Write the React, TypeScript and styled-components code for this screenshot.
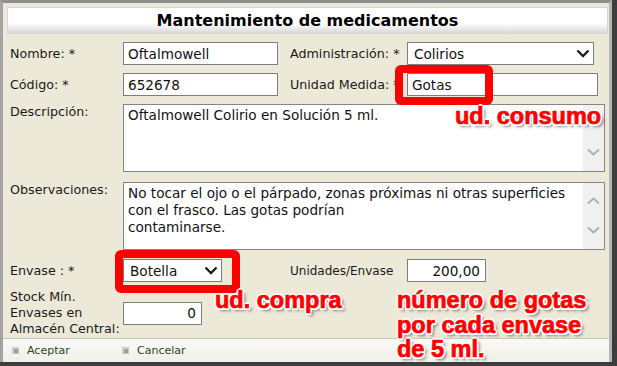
import React from 'react';
import styled, { createGlobalStyle } from 'styled-components';

const GlobalStyle = createGlobalStyle`
  html, body {
    margin: 0;
    padding: 0;
    background: #3d3d3d;
  }
  body {
    font-family: 'DejaVu Sans', Verdana, sans-serif;
  }
`;

const Window = styled.div`
  position: relative;
  width: 617px;
  height: 366px;
  background: #3d3d3d;
  overflow: hidden;
`;

const Frame = styled.div`
  box-sizing: border-box;
  width: 612px;
  height: 362px;
  display: flex;
  flex-direction: column;
  background: #ece9d8;
  border-top: 3px solid #8f8f8f;
  border-left: 3px solid #a3a3a3;
  border-right: 3px solid #b5b5b5;
`;

const TitleBar = styled.div`
  box-sizing: border-box;
  height: 27px;
  margin: 4px 1px 0 4px;
  border: 1px solid #d6d6d6;
  background: linear-gradient(#ffffff 0%, #ffffff 60%, #d9d9d9 100%);
  display: flex;
  align-items: center;
  justify-content: center;
  font-weight: bold;
  font-size: 16px;
  color: #000;
`;

const Form = styled.div`
  flex: 1;
  display: flex;
  flex-direction: column;
  padding-left: 7px;
`;

const Row = styled.div<{ $mt: number; $top?: boolean }>`
  display: flex;
  align-items: ${(p) => (p.$top ? 'flex-start' : 'center')};
  margin-top: ${(p) => p.$mt}px;
`;

const Label = styled.label<{ $w: number; $ml?: number; $size?: number }>`
  flex: none;
  width: ${(p) => p.$w}px;
  margin-left: ${(p) => p.$ml ?? 0}px;
  font-size: ${(p) => p.$size ?? 12.7}px;
  line-height: 16px;
  color: #1a1a1a;
`;

const TextInput = styled.div<{ $w: number; $right?: boolean }>`
  box-sizing: border-box;
  flex: none;
  width: ${(p) => p.$w}px;
  height: 23px;
  padding: 0 ${(p) => (p.$right ? 5 : 4)}px;
  border: 1px solid #7d7d7d;
  background: #fff;
  display: flex;
  align-items: center;
  justify-content: ${(p) => (p.$right ? 'flex-end' : 'flex-start')};
  font-size: 13.6px;
  color: #111;
`;

const SelectBox = styled.div<{ $w: number }>`
  box-sizing: border-box;
  flex: none;
  width: ${(p) => p.$w}px;
  height: 23px;
  padding: 0 3px 0 6px;
  border: 1px solid #7d7d7d;
  background: #fff;
  display: flex;
  align-items: center;
  justify-content: space-between;
  font-size: 13.6px;
  color: #111;
`;

const TextArea = styled.div`
  box-sizing: border-box;
  flex: none;
  width: 482px;
  height: 68px;
  border: 1px solid #858585;
  background: #fff;
  display: flex;
`;

const AreaText = styled.div`
  flex: 1;
  padding: 2px 4px;
  font-size: 13.6px;
  line-height: 17px;
  color: #111;
  white-space: pre;
`;

const ScrollTrack = styled.div`
  flex: none;
  width: 21px;
  background: #f0f0f0;
  display: flex;
  flex-direction: column;
  align-items: center;
  justify-content: space-between;
  padding: 14px 0 15px;
  box-sizing: border-box;
`;

const Footer = styled.div`
  box-sizing: border-box;
  height: 24px;
  border-top: 1px solid #c9c7bd;
  background: linear-gradient(#f9f9f7, #f0efe9);
  display: flex;
  align-items: center;
  padding-left: 9px;
`;

const FooterButton = styled.div`
  width: 110px;
  display: flex;
  align-items: center;
  gap: 8px;
  font-size: 11px;
  color: #264a26;
`;

const ButtonIcon = styled.span`
  box-sizing: border-box;
  width: 7px;
  height: 7px;
  border: 1px solid #c6c6c6;
  background: #9c9c9c;
  box-shadow: inset 1px 1px 0 #d2d2d2;
`;

const RedBox = styled.div<{ $x: number; $y: number; $w: number; $h: number }>`
  position: absolute;
  box-sizing: border-box;
  left: ${(p) => p.$x}px;
  top: ${(p) => p.$y}px;
  width: ${(p) => p.$w}px;
  height: ${(p) => p.$h}px;
  border: 8px solid #ff0000;
  border-radius: 6px;
`;

const Note = styled.div<{ $x: number; $y: number }>`
  position: absolute;
  left: ${(p) => p.$x}px;
  top: ${(p) => p.$y}px;
  font-family: 'Liberation Sans', Arial, sans-serif;
  font-weight: bold;
  font-size: 23.5px;
  line-height: 24.5px;
  color: #ff0000;
  white-space: pre;
  -webkit-text-stroke: 0.7px #ff0000;
  text-shadow: 1.5px 1.5px 0 #fff, -1.5px -1.5px 0 #fff, 1.5px -1.5px 0 #fff,
    -1.5px 1.5px 0 #fff, 0 2px 0 #fff, 2px 0 0 #fff, -2px 0 0 #fff, 0 -2px 0 #fff,
    3px 3px 3px rgba(0, 0, 0, 0.5);
`;

const Chevron = () => (
  <svg width='14' height='9' viewBox='0 0 14 9'>
    <polyline points='1.5,1.5 7,7 12.5,1.5' fill='none' stroke='#1a1a1a' strokeWidth='2.3' />
  </svg>
);

const ScrollArrow = ({ down }: { down?: boolean }) => (
  <svg width='13' height='8' viewBox='0 0 13 8'>
    <polyline
      points={down ? '1,1.5 6.5,6.5 12,1.5' : '1,6.5 6.5,1.5 12,6.5'}
      fill='none'
      stroke='#acacac'
      strokeWidth='1.8'
    />
  </svg>
);

const MultiText: React.FC<{ text: string }> = ({ text }) => (
  <TextArea>
    <AreaText>{text}</AreaText>
    <ScrollTrack>
      <ScrollArrow />
      <ScrollArrow down />
    </ScrollTrack>
  </TextArea>
);

const App: React.FC = () => {
  return (
    <Window>
      <GlobalStyle />
      <Frame>
        <TitleBar>Mantenimiento de medicamentos</TitleBar>
        <Form>
          <Row $mt={8}>
            <Label $w={113}>Nombre: *</Label>
            <TextInput $w={155}>Oftalmowell</TextInput>
            <Label $w={117} $ml={12}>
              Administración: *
            </Label>
            <SelectBox $w={187}>
              Colirios
              <Chevron />
            </SelectBox>
          </Row>
          <Row $mt={8}>
            <Label $w={113}>Código: *</Label>
            <TextInput $w={155}>652678</TextInput>
            <Label $w={117} $ml={12}>
              Unidad Medida: *
            </Label>
            <TextInput $w={191}>Gotas</TextInput>
          </Row>
          <Row $mt={8} $top>
            <Label $w={113}>Descripción:</Label>
            <MultiText text='Oftalmowell Colirio en Solución 5 ml.' />
          </Row>
          <Row $mt={10} $top>
            <Label $w={113}>Observaciones:</Label>
            <MultiText
              text={
                'No tocar el ojo o el párpado, zonas próximas ni otras superficies\ncon el frasco. Las gotas podrían\ncontaminarse.'
              }
            />
          </Row>
          <Row $mt={9}>
            <Label $w={113}>Envase : *</Label>
            <SelectBox $w={99}>
              Botella
              <Chevron />
            </SelectBox>
            <Label $w={117} $ml={68} $size={12}>
              Unidades/Envase
            </Label>
            <TextInput $w={79} $right>
              200,00
            </TextInput>
          </Row>
          <Row $mt={7}>
            <Label $w={113}>
              Stock Mín.
              <br />
              Envases en
              <br />
              Almacén Central:
            </Label>
            <TextInput $w={79} $right>
              0
            </TextInput>
          </Row>
        </Form>
        <Footer>
          <FooterButton>
            <ButtonIcon />
            Aceptar
          </FooterButton>
          <FooterButton>
            <ButtonIcon />
            Cancelar
          </FooterButton>
        </Footer>
      </Frame>
      <RedBox $x={395} $y={65} $w={98} $h={40} />
      <RedBox $x={115} $y={250} $w={125} $h={43} />
      <Note $x={455} $y={104}>ud. consumo</Note>
      <Note $x={215} $y={288}>ud. compra</Note>
      <Note $x={397} $y={288}>{'número de gotas\npor cada envase\nde 5 ml.'}</Note>
    </Window>
  );
};

export default App;
